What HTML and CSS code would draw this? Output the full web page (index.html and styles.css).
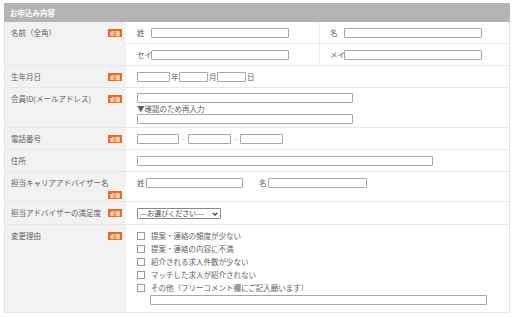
FILE: index.html
```html
<!DOCTYPE html>
<html lang="ja">
<head>
<meta charset="utf-8">
<link rel="stylesheet" href="styles.css">
</head>
<body>
<div class="form">
  <div class="head">お申込み内容</div>

  <div class="row">
    <div class="lab"><span class="lt">名前（全角）</span><span class="req">必須</span></div>
    <div class="val split">
      <div class="sub">
        <div class="half"><span class="pl">姓</span><span class="inp w138"></span></div>
        <div class="half divl"><span class="pl">名</span><span class="inp w138"></span></div>
      </div>
      <div class="sub">
        <div class="half"><span class="pl">セイ</span><span class="inp w138"></span></div>
        <div class="half divl"><span class="pl">メイ</span><span class="inp w138"></span></div>
      </div>
    </div>
  </div>

  <div class="row">
    <div class="lab"><span class="lt">生年月日</span><span class="req">必須</span></div>
    <div class="val line">
      <span class="inp w33"></span><span class="unit">年</span><span class="inp w29"></span><span class="unit">月</span><span class="inp w29"></span><span class="unit">日</span>
    </div>
  </div>

  <div class="row">
    <div class="lab"><span class="lt">会員ID(メールアドレス)</span><span class="req">必須</span></div>
    <div class="val stack">
      <span class="inp w216"></span>
      <span class="note">▼確認のため再入力</span>
      <span class="inp w216"></span>
    </div>
  </div>

  <div class="row">
    <div class="lab"><span class="lt">電話番号</span><span class="req">必須</span></div>
    <div class="val line">
      <span class="inp w42"></span><span class="dash">-</span><span class="inp w43"></span><span class="dash">-</span><span class="inp w43"></span>
    </div>
  </div>

  <div class="row">
    <div class="lab"><span class="lt">住所</span></div>
    <div class="val line"><span class="inp w296"></span></div>
  </div>

  <div class="row">
    <div class="lab wrap"><span class="lt">担当キャリアアドバイザー名</span><span class="req">必須</span></div>
    <div class="val line top">
      <span class="pl2">姓</span><span class="inp w97"></span>
      <span class="pl2 gapl">名</span><span class="inp w99"></span>
    </div>
  </div>

  <div class="row">
    <div class="lab"><span class="lt">担当アドバイザーの満足度</span><span class="req">必須</span></div>
    <div class="val line">
      <span class="sel">---お選びください---<svg class="chev" viewBox="0 0 8 8" width="6" height="6"><path d="M1 2.5 L4 5.5 L7 2.5" fill="none" stroke="#333" stroke-width="1.6"/></svg></span>
    </div>
  </div>

  <div class="row last">
    <div class="lab"><span class="lt">変更理由</span><span class="req">必須</span></div>
    <div class="val checks">
      <div class="ck"><span class="box"></span>提案・連絡の頻度が少ない</div>
      <div class="ck"><span class="box"></span>提案・連絡の内容に不満</div>
      <div class="ck"><span class="box"></span>紹介される求人件数が少ない</div>
      <div class="ck"><span class="box"></span>マッチした求人が紹介されない</div>
      <div class="ck"><span class="box"></span>その他（フリーコメント欄にご記入願います）</div>
      <span class="inp w337 other"></span>
    </div>
  </div>
</div>
</body>
</html>
```

FILE: styles.css
```css
html, body {
  margin: 0;
  padding: 0;
  background: #fff;
}
body {
  font-family: "Noto Sans CJK JP", "Noto Sans", sans-serif;
  font-size: 7.5px;
  color: #606060;
}
.form {
  margin: 3px 0 0 4px;
  width: 504px;
  border-left: 1px solid #e2e2e2;
  border-right: 1px solid #e2e2e2;
}
.head {
  height: 19px;
  background: #b4b4b4;
  color: #fff;
  font-weight: bold;
  font-size: 7.5px;
  line-height: 19px;
  padding-left: 6px;
  margin-left: -1px;
  margin-right: -1px;
}
.row {
  display: grid;
  grid-template-columns: 121px 1fr;
  border-bottom: 1px solid #e8e8e8;
}
.lab {
  background: #f2f2f2;
  display: flex;
  justify-content: space-between;
  align-items: flex-start;
  padding: 6px 4px 2px 6px;
  line-height: 10px;
}
.lab.wrap {
  flex-wrap: wrap;
}
.lab.wrap .req {
  margin-left: auto;
  margin-top: 3px;
}
.lt {
  white-space: nowrap;
}
.req {
  display: inline-block;
  width: 14px;
  height: 8px;
  margin-top: 1px;
  background: #e86a1c;
  color: #fff;
  font-size: 5px;
  font-weight: bold;
  line-height: 8px;
  text-align: center;
}
.val {
  padding: 5px 0 5px 11px;
}
.val.line {
  display: flex;
  align-items: center;
  padding-top: 6px;
  padding-bottom: 5px;
}
.val.line.top {
  align-items: flex-start;
}
.inp {
  display: inline-block;
  height: 8px;
  border: 1px solid #a8a8a8;
  border-radius: 1px;
  background: #fff;
  flex: none;
}
.w138 { width: 136px; }
.w33 { width: 31px; }
.w29 { width: 27px; }
.w216 { width: 214px; }
.w42 { width: 40px; }
.w43 { width: 41px; }
.w296 { width: 294px; }
.w97 { width: 95px; }
.w99 { width: 97px; }
.w337 { width: 335px; }
.unit {
  width: 8px;
  line-height: 10px;
  text-align: left;
  margin-left: 1px;
}
.dash {
  width: 9px;
  text-align: center;
  color: #aaa;
  line-height: 10px;
}
.val.split {
  padding: 0;
}
.sub {
  display: grid;
  grid-template-columns: 193px 1fr;
  height: 21px;
}
.sub + .sub {
  border-top: 1px solid #ececec;
}
.half {
  display: flex;
  align-items: center;
  padding-left: 11px;
}
.half.divl {
  border-left: 1px solid #ececec;
  padding-left: 10px;
}
.pl {
  width: 14px;
  white-space: nowrap;
  line-height: 10px;
  flex: none;
}
.pl2 {
  width: 9px;
  line-height: 10px;
}
.gapl {
  margin-left: 16px;
}
.val.stack {
  display: flex;
  flex-direction: column;
  align-items: flex-start;
  padding-top: 5px;
  padding-bottom: 3px;
}
.note {
  line-height: 11px;
  height: 11px;
  font-size: 7.5px;
}
.sel {
  position: relative;
  display: inline-block;
  width: 80px;
  height: 9px;
  border: 1px solid #8a8a8a;
  border-radius: 1px;
  font-size: 7px;
  line-height: 9px;
  padding-left: 2px;
  box-sizing: content-box;
  color: #444;
  white-space: nowrap;
}
.chev {
  position: absolute;
  right: 2px;
  top: 2px;
}
.val.checks {
  padding-top: 4px;
  padding-bottom: 7px;
}
.ck {
  display: flex;
  align-items: center;
  height: 13px;
  font-size: 7.5px;
}
.box {
  display: inline-block;
  width: 6px;
  height: 6px;
  border: 1px solid #999;
  margin-right: 6px;
  flex: none;
}
.other {
  display: block;
  margin-left: 13px;
  margin-top: 1px;
}
```
